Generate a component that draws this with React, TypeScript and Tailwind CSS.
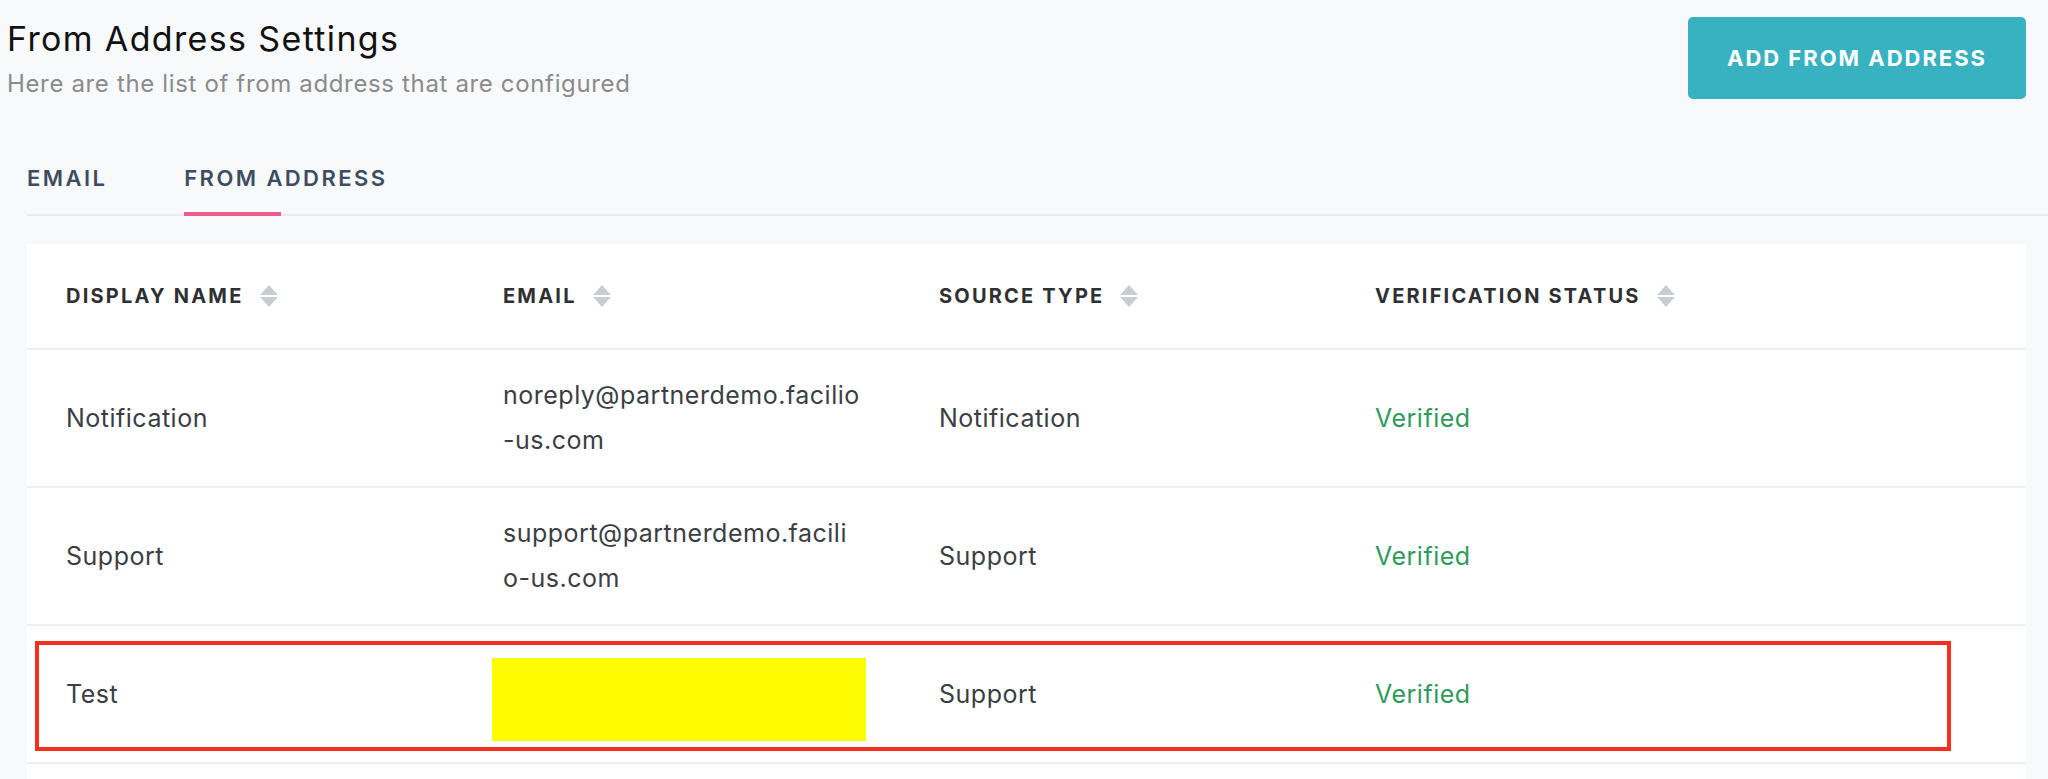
import React from "react";

const ROWS = [
  {
    id: "1",
    name: "Notification",
    email: ["noreply@partnerdemo.facilio", "-us.com"],
    source: "Notification",
    status: "Verified",
  },
  {
    id: "2",
    name: "Support",
    email: ["support@partnerdemo.facili", "o-us.com"],
    source: "Support",
    status: "Verified",
  },
  {
    id: "3",
    name: "Test",
    email: [],
    source: "Support",
    status: "Verified",
    highlighted: true,
  },
];

const COLUMNS = ["Display Name", "Email", "Source Type", "Verification Status"];

function SortIcon() {
  return (
    <svg width="20" height="22" viewBox="0 0 20 22" className="shrink-0">
      <polygon points="10,0 19,10 1,10" fill="#c9cdd0" />
      <polygon points="1,12 19,12 10,22" fill="#c9cdd0" />
    </svg>
  );
}

export default function App() {
  return (
    <div className="h-[779px] overflow-hidden bg-[#f8f9fb] font-['Inter',sans-serif]">
      <div className="flex items-start justify-between pl-[7px] pr-[22px] pt-[17px]">
        <div className="pt-[2px]">
          <h1 className="text-[34px] leading-[40px] tracking-[0.04em] text-[#111111]">
            From Address Settings
          </h1>
          <p className="mt-[9px] text-[24px] leading-[32px] tracking-[0.027em] text-[#8b8b8b]">
            Here are the list of from address that are configured
          </p>
        </div>
        <button className="h-[82px] w-[338px] rounded-[5px] bg-[#38b2c1] text-[22px] font-bold tracking-[0.09em] text-white">
          ADD FROM ADDRESS
        </button>
      </div>

      <div className="ml-[27px] mt-[64px] flex gap-[77px] border-b-2 border-[#e8eaed]">
        <div className="pb-[22px] text-[22px] font-semibold leading-[28px] tracking-[0.11em] text-[#3d4c5e]">
          EMAIL
        </div>
        <div className="relative pb-[22px] text-[22px] font-semibold leading-[28px] tracking-[0.11em] text-[#3d4c5e]">
          FROM ADDRESS
          <span className="absolute bottom-[-2px] left-0 h-[4px] w-[97px] bg-[#ee5a8c]" />
        </div>
      </div>

      <div className="ml-[27px] mr-[22px] mt-[28px] bg-white pb-[40px]">
        <div className="grid h-[106px] grid-cols-[437px_436px_436px_1fr] items-center border-b-2 border-[#eef0f3]">
          {COLUMNS.map((col) => (
            <div key={col} className="flex items-center gap-[15px] pl-[39px]">
              <span className="text-[20px] font-bold uppercase leading-none tracking-[0.11em] text-[#2f3033]">
                {col}
              </span>
              <SortIcon />
            </div>
          ))}
        </div>

        {ROWS.map((row) => (
          <div
            key={row.id}
            className="relative grid h-[138px] grid-cols-[437px_436px_436px_1fr] items-center border-b-2 border-[#eef0f3] text-[25px] leading-[45px] tracking-[0.02em] text-[#3b3e44]"
          >
            <div className="pl-[39px]">{row.name}</div>
            <div className="pl-[39px]">
              {row.email.map((line) => (
                <span key={line} className="block">
                  {line}
                </span>
              ))}
            </div>
            <div className="pl-[39px]">{row.source}</div>
            <div className="pl-[39px] text-[#2f9b5b]">{row.status}</div>

            {row.highlighted && (
              <>
                <div className="absolute left-[465px] top-[32px] h-[83px] w-[374px] bg-[#fffc00]" />
                <div className="absolute left-[8px] top-[15px] h-[110px] w-[1916px] border-4 border-[#f5301c]" />
              </>
            )}
          </div>
        ))}
      </div>
    </div>
  );
}
